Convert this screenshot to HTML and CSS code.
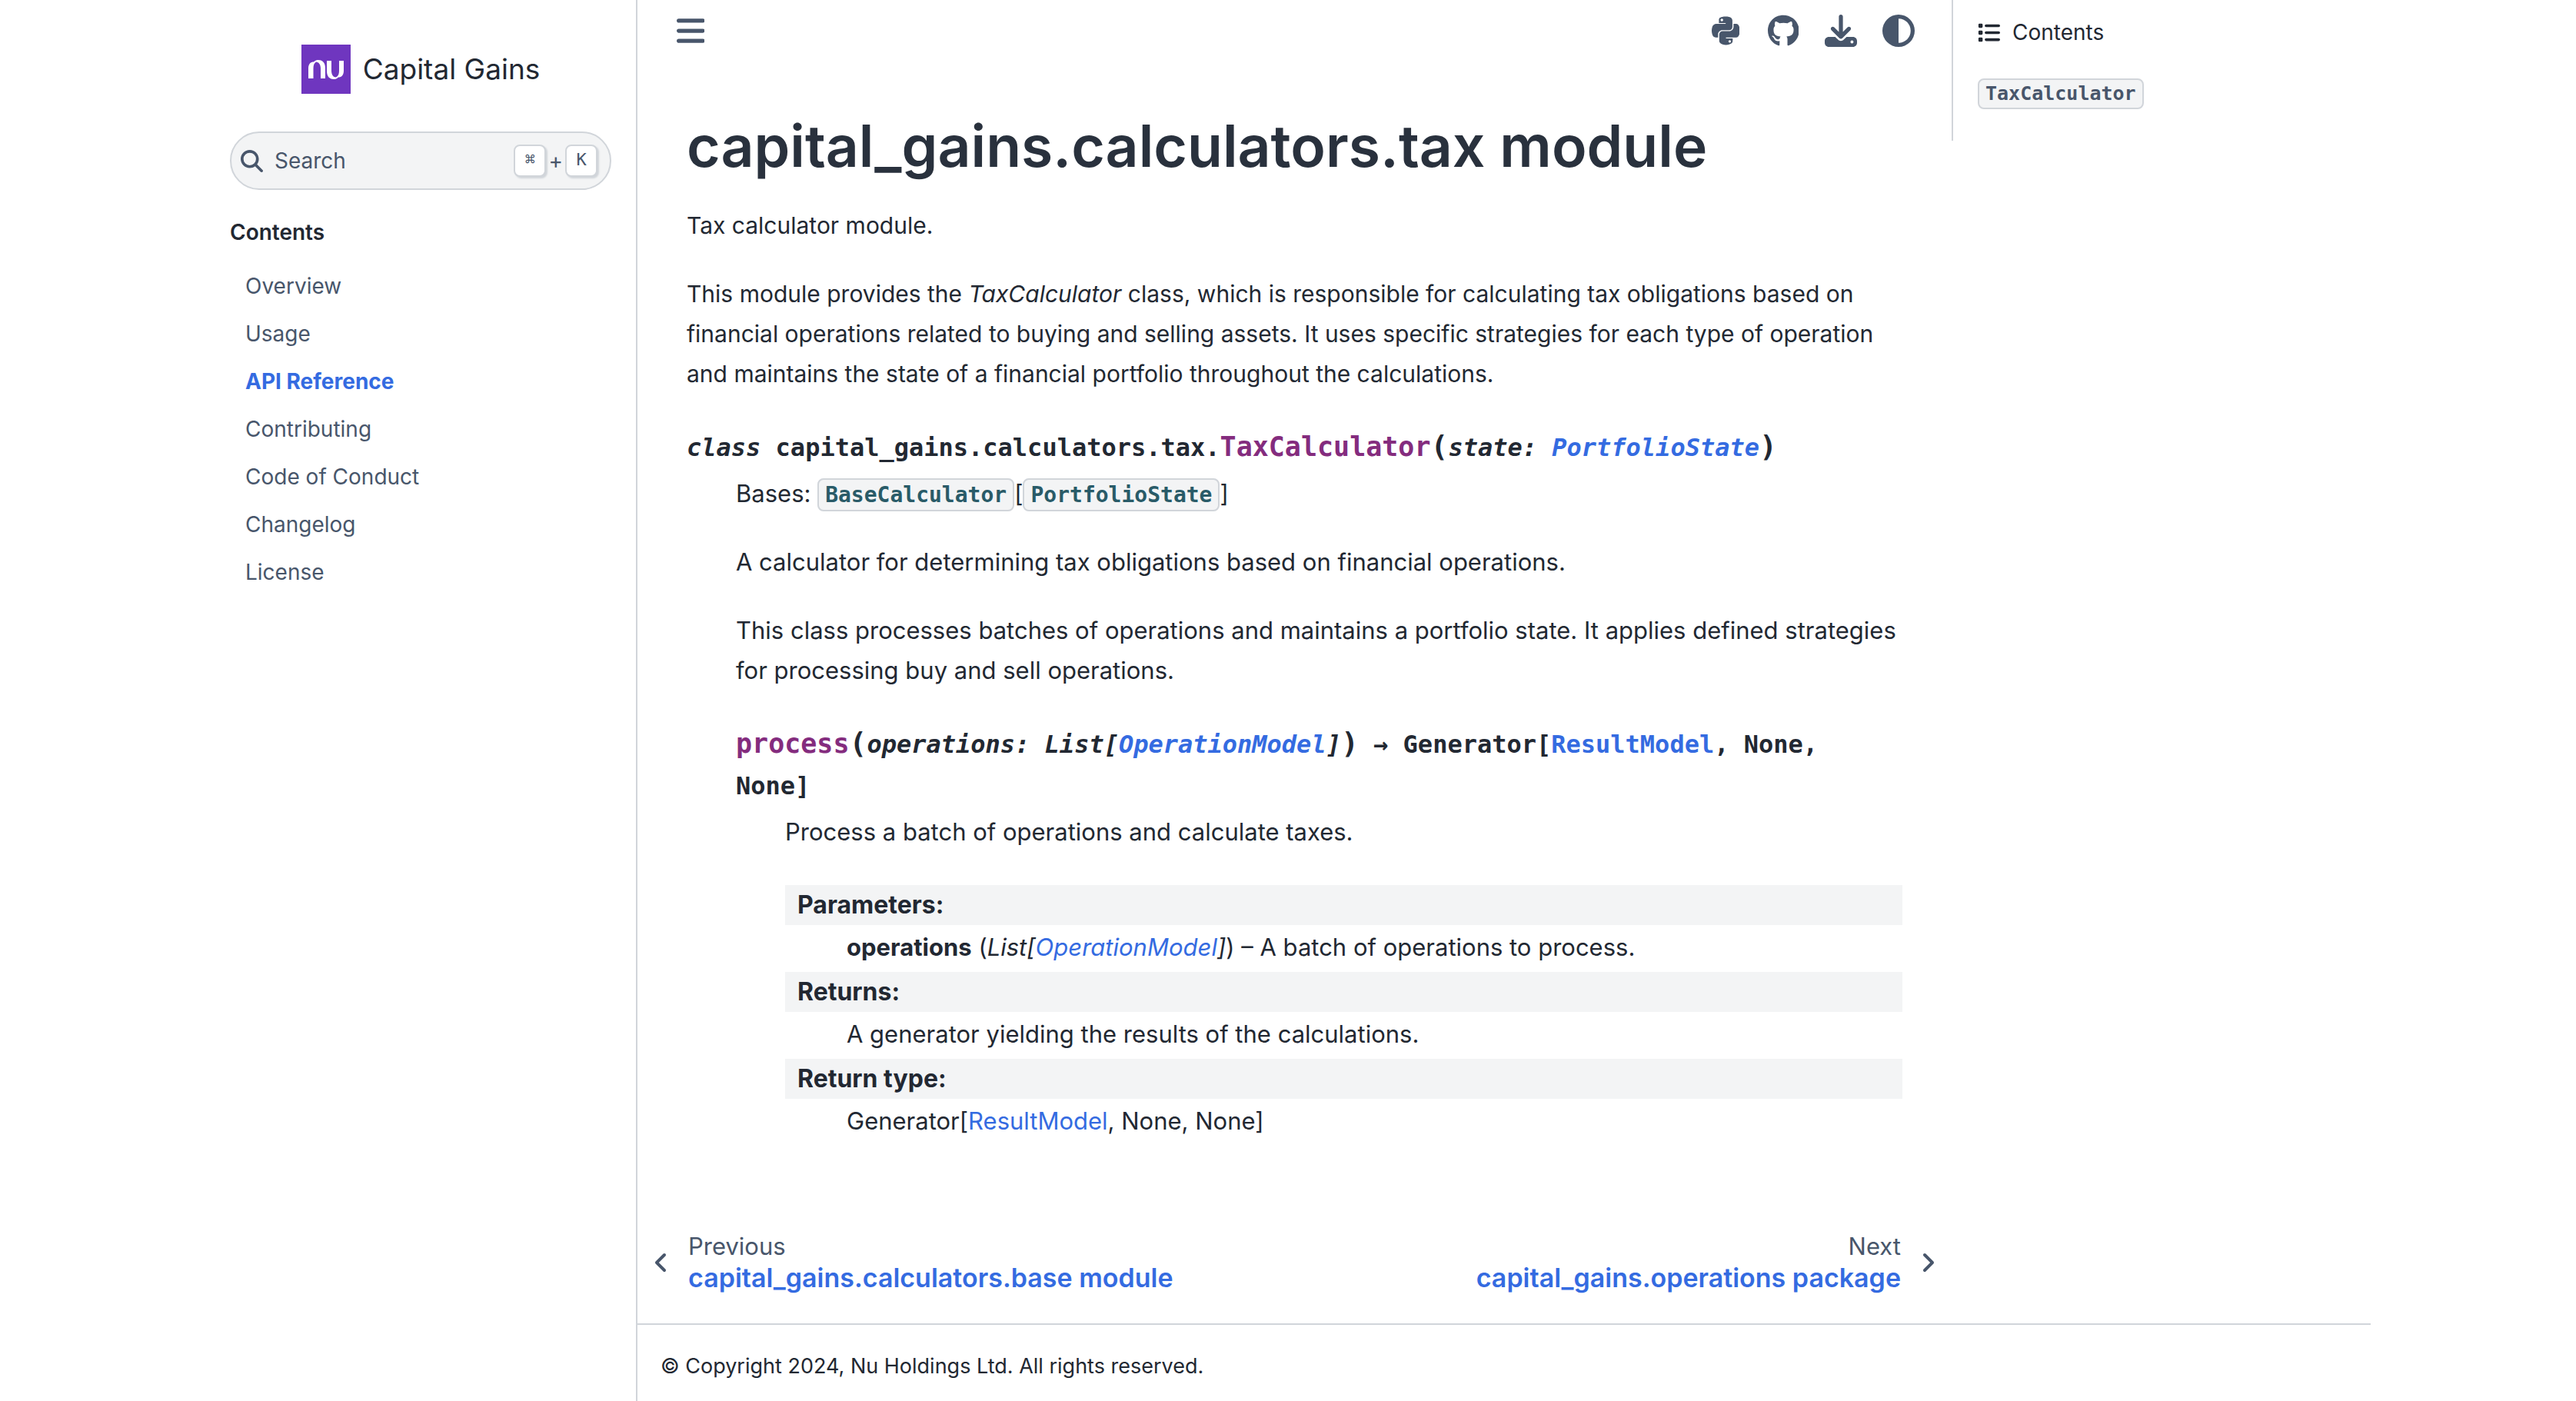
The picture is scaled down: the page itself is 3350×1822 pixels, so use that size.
FILE: index.html
```html
<!DOCTYPE html>
<html lang="en">
<head>
<meta charset="utf-8">
<title>capital_gains.calculators.tax module — Capital Gains</title>
<link rel="stylesheet" href="styles.css">
</head>
<body>
<div class="page">
  <aside class="sidebar">
    <a class="brand" href="#">
      <svg class="brand-logo" viewBox="0 0 64 64" aria-hidden="true">
        <rect width="64" height="64" fill="#6f36bf"/>
        <path fill="#fff" d="M9 44V31C9 25 12 22.500 16 22.500C18 20.500 20 20 22 20C28 20 31 24 31 31V44H25V31C25 26 22.500 22.500 19 22.500C16.500 24 15.500 27 15.500 31V44Z"/>
        <path fill="#fff" d="M33 21H39V34C39 39 41.500 42.500 45 42.500C48 41 49 38 49 34V21H55V34C55 40 52 42.500 48 42.500C46 44.500 44.500 45 42 45C36 45 33 41 33 34Z"/>
      </svg>
      <span>Capital Gains</span>
    </a>
    <button class="search" type="button">
      <svg class="search-icon" viewBox="0 0 512 512" aria-hidden="true"><path d="M416 208c0 45.900-14.900 88.300-40 122.700L502.600 457.400c12.500 12.500 12.500 32.800 0 45.300s-32.800 12.500-45.300 0L330.700 376c-34.400 25.200-76.800 40-122.700 40C93.100 416 0 322.900 0 208S93.100 0 208 0S416 93.100 416 208zM208 352a144 144 0 1 0 0-288 144 144 0 1 0 0 288z"/></svg>
      <span class="search-label">Search</span>
      <span class="search-keys"><kbd>⌘</kbd>+<kbd>K</kbd></span>
    </button>
    <nav class="side-nav" aria-label="Contents">
      <p class="side-title">Contents</p>
      <ul>
        <li><a href="#">Overview</a></li>
        <li><a href="#">Usage</a></li>
        <li><a class="current" href="#">API Reference</a></li>
        <li><a href="#">Contributing</a></li>
        <li><a href="#">Code of Conduct</a></li>
        <li><a href="#">Changelog</a></li>
        <li><a href="#">License</a></li>
      </ul>
    </nav>
  </aside>
  <div class="body">
    <div class="columns">
      <main class="main">
        <header class="toolbar">
          <button class="icon-button" type="button" aria-label="Toggle sidebar">
            <svg viewBox="0 0 448 512"><path d="M0 96c0-17.700 14.300-32 32-32h384c17.700 0 32 14.300 32 32s-14.300 32-32 32H32C14.300 128 0 113.700 0 96zm0 160c0-17.700 14.300-32 32-32h384c17.700 0 32 14.300 32 32s-14.300 32-32 32H32c-17.700 0-32-14.300-32-32zm448 160c0 17.700-14.300 32-32 32H32c-17.700 0-32-14.300-32-32s14.300-32 32-32h384c17.700 0 32 14.300 32 32z"/></svg>
          </button>
          <div class="tools">
            <a class="icon-button" href="#" aria-label="PyPI">
              <svg viewBox="0 0 448 512"><path d="M439.800 200.500c-7.700-30.900-22.300-54.200-53.400-54.200h-40.100v47.400c0 36.800-31.200 67.800-66.800 67.800H172.700c-29.200 0-53.400 25-53.400 54.300v101.800c0 29 25.200 46 53.400 54.300 33.800 9.900 66.300 11.700 106.800 0 26.900-7.800 53.400-23.500 53.400-54.300v-40.700H226.200v-13.600h160.200c31.100 0 42.600-21.700 53.400-54.200 11.200-33.500 10.700-65.700 0-108.600zM286.200 404c11.100 0 20.100 9.100 20.100 20.300 0 11.300-9 20.400-20.100 20.400-11 0-20.100-9.200-20.100-20.400.1-11.300 9.100-20.300 20.100-20.300zM167.800 248.100h106.800c29.700 0 53.400-24.500 53.400-54.300V91.900c0-29-24.400-50.700-53.400-55.600-35.800-5.900-74.700-5.600-106.800.1-45.200 8-53.400 24.700-53.400 55.600v40.700h106.900v13.600h-147c-31.100 0-58.300 18.700-66.800 54.200-9.800 40.700-10.200 66.100 0 108.600 7.600 31.600 25.700 54.200 56.800 54.200H101v-48.800c0-35.300 30.500-66.400 66.800-66.400zm-6.700-142.600c-11.100 0-20.100-9.100-20.100-20.300.1-11.300 9-20.400 20.100-20.400 11 0 20.100 9.200 20.100 20.400s-9 20.300-20.100 20.300z"/></svg>
            </a>
            <a class="icon-button" href="#" aria-label="GitHub">
              <svg viewBox="0 0 496 512"><path d="M165.900 397.400c0 2-2.300 3.600-5.200 3.600-3.300.3-5.600-1.300-5.600-3.600 0-2 2.300-3.600 5.200-3.600 3-.3 5.600 1.300 5.600 3.600zM244.800 8C106.100 8 0 113.300 0 252c0 110.900 69.800 205.800 169.500 239.200 12.800 2.300 17.300-5.600 17.300-12.100 0-6.200-.3-40.400-.3-61.400 0 0-70 15-84.700-29.800 0 0-11.400-29.100-27.800-36.600 0 0-22.900-15.700 1.600-15.400 0 0 24.900 2 38.600 25.800 21.900 38.600 58.600 27.500 72.900 20.900 2.300-16 8.800-27.100 16-33.700-55.900-6.200-112.300-14.300-112.300-110.500 0-27.500 7.600-41.300 23.600-58.900-2.600-6.500-11.100-33.300 2.600-67.900 20.900-6.500 69 27 69 27 20-5.600 41.500-8.500 62.800-8.500s42.800 2.900 62.800 8.500c0 0 48.100-33.600 69-27 13.700 34.700 5.200 61.400 2.600 67.900 16 17.700 25.800 31.500 25.800 58.900 0 96.500-58.900 104.200-114.800 110.500 9.200 7.900 17 22.900 17 46.400 0 33.700-.3 75.400-.3 83.600 0 6.500 4.600 14.400 17.300 12.100C428.200 457.800 496 362.900 496 252 496 113.300 383.500 8 244.800 8z"/></svg>
            </a>
            <button class="icon-button" type="button" aria-label="Download this page">
              <svg viewBox="0 0 512 512"><path d="M288 32c0-17.700-14.300-32-32-32s-32 14.300-32 32V274.700l-73.400-73.400c-12.500-12.500-32.800-12.500-45.300 0s-12.500 32.800 0 45.300l128 128c12.500 12.500 32.800 12.500 45.300 0l128-128c12.500-12.500 12.500-32.800 0-45.300s-32.800-12.500-45.300 0L288 274.700V32zM64 352c-35.300 0-64 28.700-64 64v32c0 35.300 28.700 64 64 64H448c35.300 0 64-28.700 64-64V416c0-35.300-28.700-64-64-64H346.500l-45.300 45.300c-25 25-65.500 25-90.500 0L165.500 352H64zm368 56a24 24 0 1 1 0 48 24 24 0 1 1 0-48z"/></svg>
            </button>
            <button class="icon-button" type="button" aria-label="Color mode">
              <svg viewBox="0 0 512 512"><path d="M448 256c0-106-86-192-192-192V448c106 0 192-86 192-192zM0 256a256 256 0 1 1 512 0A256 256 0 1 1 0 256z"/></svg>
            </button>
          </div>
        </header>
        <article class="article">
          <h1>capital_gains.calculators.tax module</h1>
          <p>Tax calculator module.</p>
          <p>This module provides the <em>TaxCalculator</em> class, which is responsible for calculating tax obligations based on financial operations related to buying and selling assets. It uses specific strategies for each type of operation and maintains the state of a financial portfolio throughout the calculations.</p>
          <dl class="api">
            <dt><em>class </em>capital_gains.calculators.tax.<span class="name">TaxCalculator</span><span class="paren">(</span><em>state: <a href="#">PortfolioState</a></em><span class="paren">)</span></dt>
            <dd>
              <p>Bases: <a class="code-link" href="#"><code>BaseCalculator</code></a>[<a class="code-link" href="#"><code>PortfolioState</code></a>]</p>
              <p>A calculator for determining tax obligations based on financial operations.</p>
              <p>This class processes batches of operations and maintains a portfolio state. It applies defined strategies for processing buy and sell operations.</p>
              <dl class="api">
                <dt><span class="name">process</span><span class="paren">(</span><em>operations: List[<a href="#">OperationModel</a>]</em><span class="paren">)</span> → Generator[<a href="#">ResultModel</a>, None, None]</dt>
                <dd>
                  <p>Process a batch of operations and calculate taxes.</p>
                  <dl class="fields">
                    <dt>Parameters:</dt>
                    <dd><strong>operations</strong> (<em>List[<a href="#">OperationModel</a>]</em>) – A batch of operations to process.</dd>
                    <dt>Returns:</dt>
                    <dd>A generator yielding the results of the calculations.</dd>
                    <dt>Return type:</dt>
                    <dd>Generator[<a href="#">ResultModel</a>, None, None]</dd>
                  </dl>
                </dd>
              </dl>
            </dd>
          </dl>
        </article>
        <nav class="pager" aria-label="Page">
          <a class="pager-link" href="#">
            <svg viewBox="0 0 320 512" aria-hidden="true"><path d="M41.400 233.400c-12.500 12.500-12.500 32.800 0 45.300l160 160c12.500 12.500 32.800 12.500 45.300 0s12.500-32.800 0-45.300L109.300 256 246.600 118.600c12.500-12.500 12.500-32.800 0-45.300s-32.800-12.500-45.300 0l-160 160z"/></svg>
            <span class="pager-text"><span>Previous</span><span class="pager-title">capital_gains.calculators.base module</span></span>
          </a>
          <a class="pager-link next" href="#">
            <span class="pager-text"><span>Next</span><span class="pager-title">capital_gains.operations package</span></span>
            <svg viewBox="0 0 320 512" aria-hidden="true"><path d="M278.600 233.400c12.500 12.500 12.500 32.800 0 45.300l-160 160c-12.500 12.500-32.800 12.500-45.300 0s-12.500-32.800 0-45.300L210.700 256 73.400 118.600c-12.500-12.500-12.500-32.800 0-45.300s32.800-12.500 45.300 0l160 160z"/></svg>
          </a>
        </nav>
      </main>
      <aside class="toc">
        <p class="toc-title">
          <svg viewBox="0 0 512 512" aria-hidden="true"><rect x="16" y="48" width="96" height="96" rx="24"/><rect x="16" y="208" width="96" height="96" rx="24"/><rect x="16" y="368" width="96" height="96" rx="24"/><rect x="160" y="64" width="352" height="64" rx="32"/><rect x="160" y="224" width="352" height="64" rx="32"/><rect x="160" y="384" width="352" height="64" rx="32"/></svg>
          <span>Contents</span>
        </p>
        <a class="toc-link" href="#"><code>TaxCalculator</code></a>
      </aside>
    </div>
    <footer class="footer"><p>© Copyright 2024, Nu Holdings Ltd. All rights reserved.</p></footer>
  </div>
</div>
</body>
</html>
```
FILE: styles.css
```css
:root {
  --text: #222832;
  --muted: #48566b;
  --link: #346be1;
  --name: #842c7e;
  --code-link: #295b68;
  --surface: #f3f4f5;
  --border: #d1d5da;
  --sans: Inter, "Liberation Sans", sans-serif;
  --mono: "DejaVu Sans Mono", "Liberation Mono", monospace;
}

* { box-sizing: border-box; }

body {
  margin: 0;
  background: #fff;
  color: var(--text);
  font: 31px/52px var(--sans);
}

p, ul, dl, dd, h1 { margin: 0; }
ul { padding: 0; list-style: none; }
a { color: var(--link); text-decoration: none; }
button { border: 0; background: none; padding: 0; font: inherit; color: inherit; cursor: pointer; }
svg { display: block; fill: currentColor; }

.page {
  display: flex;
  max-width: 2816px;
  min-height: 100vh;
  margin: 0 auto;
}

/* Left sidebar */
.sidebar {
  flex: 0 0 562px;
  padding: 58px 32px 32px;
  border-right: 2px solid var(--border);
  font-size: 28px;
}
.brand {
  display: flex;
  justify-content: center;
  align-items: center;
  gap: 16px;
  height: 64px;
  color: var(--text);
  font-size: 37px;
}
.brand-logo { width: 64px; height: 64px; }
.search {
  display: flex;
  align-items: center;
  width: 100%;
  height: 76px;
  margin-top: 49px;
  padding: 0 16px 0 12px;
  border: 2px solid var(--border);
  border-radius: 38px;
  background: var(--surface);
  color: var(--muted);
}
.search-icon { width: 29px; height: 29px; }
.search-label { margin-left: 15px; }
.search-keys { display: flex; align-items: center; gap: 3px; margin-left: auto; }
kbd {
  display: grid;
  place-items: center;
  width: 42px;
  height: 42px;
  padding-bottom: 3px;
  border: 2px solid var(--border);
  border-radius: 8px;
  background: #fff;
  box-shadow: 2px 2px 2px #d1d5da;
  font: 22px/24px var(--mono);
}
.side-nav { margin-top: 29px; }
.side-title { font-weight: 600; }
.side-nav ul { margin-top: 13px; padding-left: 20px; }
.side-nav li { line-height: 62px; }
.side-nav a { color: var(--muted); }
.side-nav a.current { color: var(--link); font-weight: 700; }

/* Centre column */
.body { flex: 1; display: flex; flex-direction: column; min-width: 0; }
.columns { flex: 1; display: flex; align-items: flex-start; }
.main { flex: 1; min-width: 0; }
.toolbar {
  display: flex;
  justify-content: space-between;
  align-items: center;
  height: 80px;
  padding: 0 48px;
  color: var(--muted);
}
.tools { display: flex; gap: 33px; }
.icon-button { display: grid; place-items: center; width: 42px; color: var(--muted); }
.icon-button svg { height: 42px; }
.article { padding: 64px 64px 0; }
.article > p { font-size: 30px; }
h1 {
  margin-bottom: 31px;
  color: #29313d;
  font-size: 75px;
  font-weight: 600;
  line-height: 92px;
}
.article p { margin-bottom: 37px; }
.api > dt {
  font-family: var(--mono);
  font-size: 32px;
  font-weight: 700;
  line-height: 54px;
}
.api { margin-top: 41px; }
.api > dd { margin: 7px 0 0 64px; }
.name { color: var(--name); font-size: 35px; }
.paren { font-size: 38px; }
code {
  border: 2px solid var(--border);
  border-radius: 8px;
  background: var(--surface);
  font-family: var(--mono);
  font-weight: 700;
}
.code-link code {
  padding: 3px 8px;
  color: var(--code-link);
  font-size: 28px;
  line-height: 1;
}
.fields { margin-top: 43px; }
.fields dt { padding-left: 16px; background: var(--surface); font-size: 32px; font-weight: 700; }
.fields dd { margin: 3px 0 6px 80px; }

.pager {
  display: flex;
  justify-content: space-between;
  padding: 111px 21px 38px;
}
.pager-link { display: flex; align-items: center; gap: 25px; color: var(--muted); }
.pager-link svg { width: 20px; height: 32px; }
.pager-text { display: flex; flex-direction: column; line-height: 40px; }
.pager-title { color: var(--link); font-size: 34px; font-weight: 600; line-height: 42px; }
.next { text-align: right; }

/* On-page contents */
.toc {
  flex: 0 0 545px;
  min-height: 183px;
  padding: 16px 32px;
  border-left: 2px solid var(--border);
  font-size: 28px;
}
.toc-title { display: flex; align-items: center; gap: 16px; }
.toc-title svg { width: 29px; height: 29px; }
.toc-link { display: block; width: fit-content; margin-top: 34px; }
.toc-link code {
  display: block;
  padding: 3px 8px;
  color: var(--muted);
  font-size: 25px;
  line-height: 30px;
}

.footer {
  padding: 31px 30px 22px;
  border-top: 2px solid var(--border);
  font-size: 27px;
  line-height: 46px;
}
```
